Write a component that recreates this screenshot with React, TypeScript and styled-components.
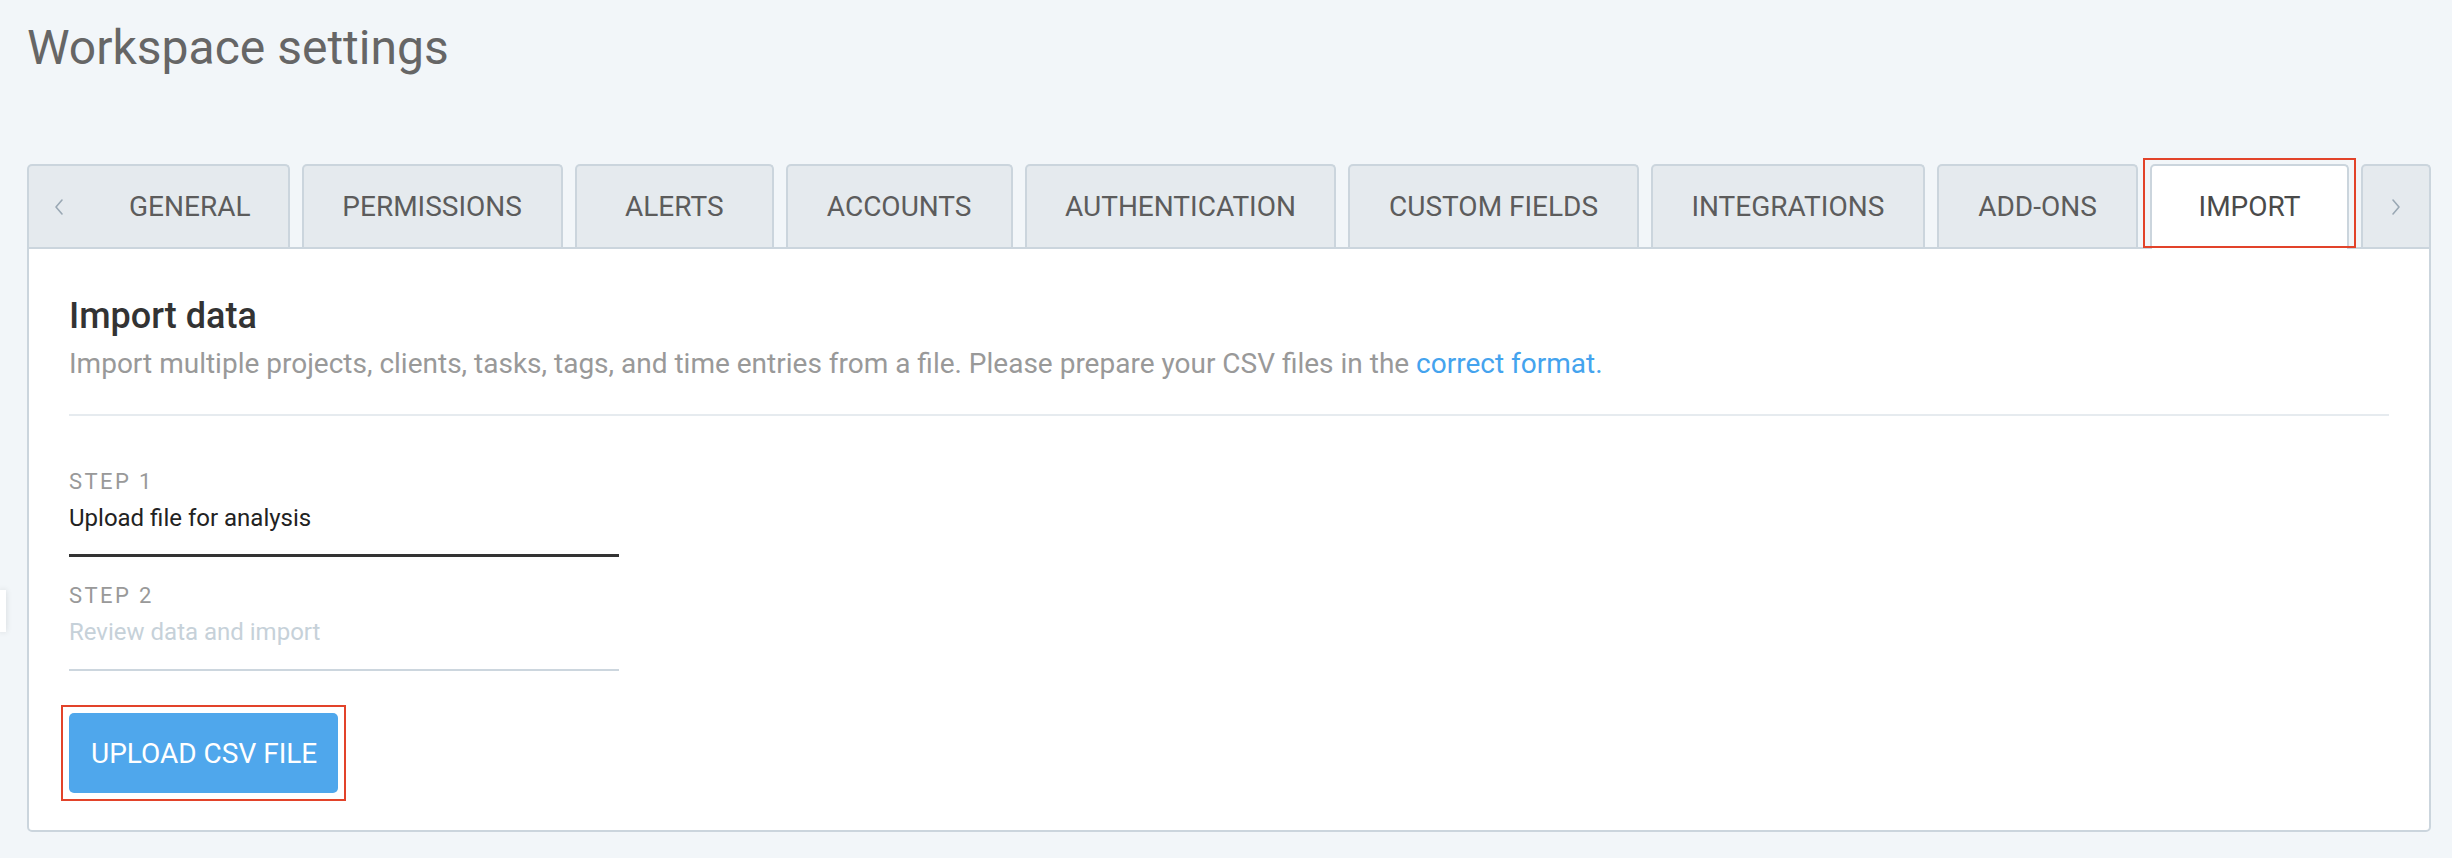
import React from "react";
import styled, { createGlobalStyle } from "styled-components";

const GlobalStyle = createGlobalStyle`
  html, body { margin: 0; padding: 0; }
  body {
    background: #f2f6f9;
    font-family: Roboto, "Noto Sans", "Liberation Sans", sans-serif;
    width: 2452px;
    height: 858px;
    overflow: hidden;
  }
`;

const Page = styled.div`
  position: relative;
  padding: 20px 21px 0 27px;
`;

const Title = styled.h1`
  margin: 0;
  font-size: 48px;
  line-height: 56px;
  font-weight: 400;
  color: #666666;
`;

const TabBar = styled.div`
  position: relative;
  z-index: 2;
  display: flex;
  align-items: flex-end;
  gap: 12px;
  margin-top: 88px;
`;

const Tab = styled.div<{ $active?: boolean; $annotated?: boolean }>`
  position: relative;
  box-sizing: border-box;
  display: flex;
  align-items: center;
  justify-content: center;
  min-width: 199px;
  height: ${(p) => (p.$active ? "85px" : "83px")};
  margin-bottom: ${(p) => (p.$active ? "-2px" : "0")};
  padding: ${(p) => (p.$active ? "0 40px 2px" : "0 40px")};
  background: ${(p) => (p.$active ? "#ffffff" : "#e5eaee")};
  border: 2px solid #cbd5dd;
  border-bottom: none;
  border-radius: 5px 5px 0 0;
  font-size: 28px;
  color: ${(p) => (p.$active ? "#4a4a4a" : "#5c5c5c")};
  text-transform: uppercase;
  white-space: nowrap;

  ${(p) =>
    p.$annotated &&
    `
    &::after {
      content: "";
      position: absolute;
      left: -9px;
      right: -9px;
      top: -8px;
      bottom: 1px;
      border: 2px solid #e2432a;
      pointer-events: none;
    }
  `}
`;

const FirstTab = styled(Tab)`
  padding-left: 0;
  justify-content: flex-start;
`;

const ArrowCell = styled.div`
  width: 60px;
  height: 100%;
  display: flex;
  align-items: center;
  justify-content: center;
  flex-shrink: 0;
`;

const TabLabel = styled.span`
  padding-left: 40px;
`;

const ArrowTab = styled(Tab)`
  min-width: 0;
  width: 70px;
  padding: 0;
  flex-shrink: 0;
  margin-left: auto;
`;

const Chevron = ({ dir }: { dir: "left" | "right" }) => (
  <svg width="10" height="18" viewBox="0 0 10 18" fill="none">
    <path
      d={dir === "left" ? "M8 2 L2 9 L8 16" : "M2 2 L8 9 L2 16"}
      stroke="#9aa8b4"
      strokeWidth="1.6"
      strokeLinecap="round"
      strokeLinejoin="round"
    />
  </svg>
);

const Card = styled.section`
  position: relative;
  z-index: 1;
  box-sizing: border-box;
  background: #ffffff;
  border: 2px solid #cbd5dd;
  border-radius: 0 0 5px 5px;
  padding: 45px 40px 37px 40px;
`;

const Heading = styled.h2`
  margin: 0;
  font-size: 36px;
  line-height: 44px;
  font-weight: 500;
  color: #333333;
`;

const Description = styled.p`
  margin: 8px 0 0;
  font-size: 28px;
  line-height: 36px;
  color: #999999;
`;

const Link = styled.a`
  color: #44a3ee;
  text-decoration: none;
`;

const Divider = styled.hr`
  margin: 32px 0 0;
  border: none;
  height: 2px;
  background: #e6ebef;
`;

const Steps = styled.div`
  margin-top: 50px;
  width: 550px;
  display: flex;
  flex-direction: column;
`;

const Step = styled.div<{ $current?: boolean }>`
  padding-bottom: ${(p) => (p.$current ? "16px" : "17px")};
  border-bottom: ${(p) => (p.$current ? "3px solid #333333" : "2px solid #ccd6de")};
  & + & {
    margin-top: 23px;
  }
`;

const StepLabel = styled.div`
  font-size: 22px;
  line-height: 32px;
  letter-spacing: 2.4px;
  color: #999999;
  text-transform: uppercase;
`;

const StepTitle = styled.div<{ $current?: boolean }>`
  font-size: 24px;
  line-height: 40px;
  color: ${(p) => (p.$current ? "#222222" : "#c6d1d9")};
`;

const UploadButton = styled.button`
  position: relative;
  margin-top: 42px;
  height: 80px;
  padding: 0 21px 0 22px;
  border: none;
  border-radius: 5px;
  background: #4fa7ec;
  color: #ffffff;
  font-family: inherit;
  font-size: 28px;
  text-transform: uppercase;
  cursor: pointer;

  &::after {
    content: "";
    position: absolute;
    inset: -8px;
    border: 2px solid #e2432a;
    pointer-events: none;
  }
`;

const SideHandle = styled.div`
  position: absolute;
  left: 0;
  top: 590px;
  width: 6px;
  height: 42px;
  background: #ffffff;
  box-shadow: 0 0 6px rgba(0, 0, 0, 0.12);
`;

const tabs = [
  "Permissions",
  "Alerts",
  "Accounts",
  "Authentication",
  "Custom fields",
  "Integrations",
  "Add-ons",
];

export default function App() {
  return (
    <>
      <GlobalStyle />
      <Page>
        <Title>Workspace settings</Title>
        <TabBar>
          <FirstTab>
            <ArrowCell>
              <Chevron dir="left" />
            </ArrowCell>
            <TabLabel>General</TabLabel>
          </FirstTab>
          {tabs.map((t) => (
            <Tab key={t}>{t}</Tab>
          ))}
          <Tab $active $annotated>
            Import
          </Tab>
          <ArrowTab>
            <Chevron dir="right" />
          </ArrowTab>
        </TabBar>
        <Card>
          <Heading>Import data</Heading>
          <Description>
            Import multiple projects, clients, tasks, tags, and time entries from a file. Please
            prepare your CSV files in the <Link href="#">correct format.</Link>
          </Description>
          <Divider />
          <Steps>
            <Step $current>
              <StepLabel>Step 1</StepLabel>
              <StepTitle $current>Upload file for analysis</StepTitle>
            </Step>
            <Step>
              <StepLabel>Step 2</StepLabel>
              <StepTitle>Review data and import</StepTitle>
            </Step>
          </Steps>
          <UploadButton>Upload CSV file</UploadButton>
        </Card>
      </Page>
      <SideHandle />
    </>
  );
}
